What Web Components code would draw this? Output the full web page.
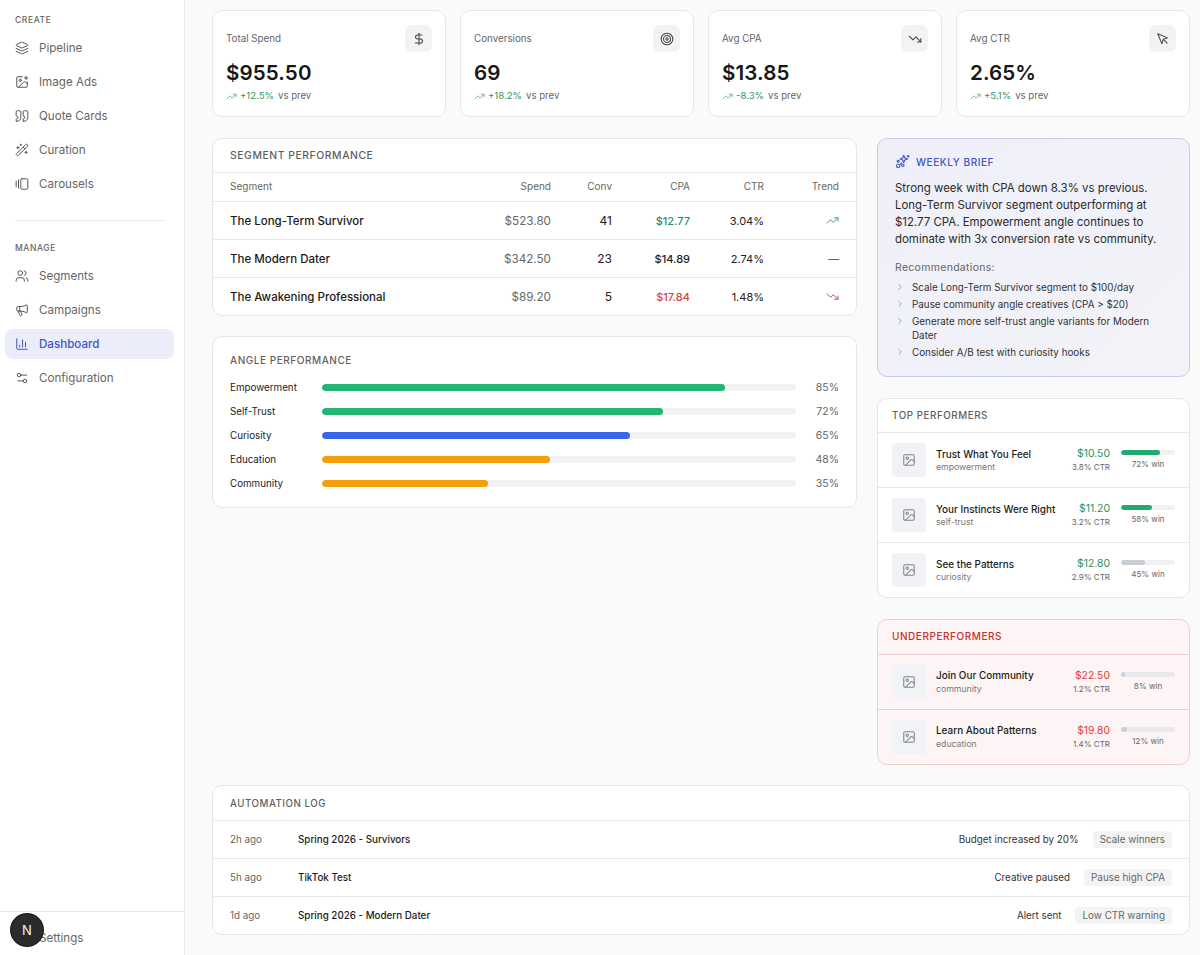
<!DOCTYPE html>
<html lang="en">
<head>
<meta charset="utf-8">
<title>Dashboard</title>
<style>
  html,body{margin:0;height:100%;background:#fafafa;overflow:hidden}
  body{font-family:Inter,'Liberation Sans',sans-serif;color:#1a1a1a}
</style>
</head>
<body>
<app-shell>
  <side-bar slot="side">
    <nav-label>CREATE</nav-label>
    <nav-item icon="layers">Pipeline</nav-item>
    <nav-item icon="imageplus">Image Ads</nav-item>
    <nav-item icon="quote">Quote Cards</nav-item>
    <nav-item icon="wand">Curation</nav-item>
    <nav-item icon="gallery">Carousels</nav-item>
    <nav-rule></nav-rule>
    <nav-label>MANAGE</nav-label>
    <nav-item icon="users">Segments</nav-item>
    <nav-item icon="megaphone">Campaigns</nav-item>
    <nav-item icon="chart" active>Dashboard</nav-item>
    <nav-item icon="sliders">Configuration</nav-item>
  </side-bar>

  <stat-row>
    <stat-card label="Total Spend" value="$955.50" delta="+12.5%" icon="dollar"></stat-card>
    <stat-card label="Conversions" value="69" delta="+18.2%" icon="target"></stat-card>
    <stat-card label="Avg CPA" value="$13.85" delta="-8.3%" icon="down"></stat-card>
    <stat-card label="Avg CTR" value="2.65%" delta="+5.1%" icon="pointer"></stat-card>
  </stat-row>

  <dash-columns>
    <data-panel slot="left" heading="SEGMENT PERFORMANCE" style="--head:10.4px;--head-h:33px;--head-b:1px">
      <seg-row head name="Segment" spend="Spend" conv="Conv" cpa="CPA" ctr="CTR" trend="Trend"></seg-row>
      <seg-row name="The Long-Term Survivor" spend="$523.80" conv="41" cpa="$12.77" ctr="3.04%" tone="good" trend="up"></seg-row>
      <seg-row name="The Modern Dater" spend="$342.50" conv="23" cpa="$14.89" ctr="2.74%" trend="flat"></seg-row>
      <seg-row name="The Awakening Professional" spend="$89.20" conv="5" cpa="$17.84" ctr="1.48%" tone="bad" trend="down"></seg-row>
    </data-panel>

    <angle-panel slot="left" heading="ANGLE PERFORMANCE">
      <angle-row name="Empowerment" pct="85" color="#22b573"></angle-row>
      <angle-row name="Self-Trust" pct="72" color="#22b573"></angle-row>
      <angle-row name="Curiosity" pct="65" color="#3b66ea"></angle-row>
      <angle-row name="Education" pct="48" color="#f59e0b"></angle-row>
      <angle-row name="Community" pct="35" color="#f59e0b"></angle-row>
    </angle-panel>

    <brief-card slot="right">
      <p slot="body">Strong week with CPA down 8.3% vs previous. Long-Term Survivor segment outperforming at $12.77 CPA. Empowerment angle continues to dominate with 3x conversion rate vs community.</p>
      <brief-item>Scale Long-Term Survivor segment to $100/day</brief-item>
      <brief-item>Pause community angle creatives (CPA &gt; $20)</brief-item>
      <brief-item>Generate more self-trust angle variants for Modern Dater</brief-item>
      <brief-item>Consider A/B test with curiosity hooks</brief-item>
    </brief-card>

    <data-panel slot="right" heading="TOP PERFORMERS" style="--head:9.8px;--head-pad:14px;--head-h:33px;--head-b:1px">
      <perf-row name="Trust What You Feel" tag="empowerment" cost="$10.50" ctr="3.8% CTR" win="72" tone="good"></perf-row>
      <perf-row name="Your Instincts Were Right" tag="self-trust" cost="$11.20" ctr="3.2% CTR" win="58" tone="good"></perf-row>
      <perf-row name="See the Patterns" tag="curiosity" cost="$12.80" ctr="2.9% CTR" win="45" tone="good" muted></perf-row>
    </data-panel>

    <data-panel slot="right" heading="UNDERPERFORMERS" tone="bad" style="--head:10px;--head-pad:14px">
      <perf-row name="Join Our Community" tag="community" cost="$22.50" ctr="1.2% CTR" win="8" tone="bad" muted></perf-row>
      <perf-row name="Learn About Patterns" tag="education" cost="$19.80" ctr="1.4% CTR" win="12" tone="bad" muted></perf-row>
    </data-panel>
  </dash-columns>

  <data-panel heading="AUTOMATION LOG" style="--head:9.7px;--head-b:0px">
    <log-row time="2h ago" name="Spring 2026 - Survivors" action="Budget increased by 20%" rule="Scale winners"></log-row>
    <log-row time="5h ago" name="TikTok Test" action="Creative paused" rule="Pause high CPA"></log-row>
    <log-row time="1d ago" name="Spring 2026 - Modern Dater" action="Alert sent" rule="Low CTR warning"></log-row>
  </data-panel>
</app-shell>

<script>
(() => {
  // lucide-style stroke icons, 24x24 viewBox
  const ICONS = {
    layers: '<path d="m12.83 2.18a2 2 0 0 0-1.66 0L2.6 6.08a1 1 0 0 0 0 1.83l8.58 3.91a2 2 0 0 0 1.66 0l8.58-3.9a1 1 0 0 0 0-1.83Z"/><path d="m22 17.65-9.17 4.16a2 2 0 0 1-1.66 0L2 17.65"/><path d="m22 12.65-9.17 4.16a2 2 0 0 1-1.66 0L2 12.65"/>',
    imageplus: '<path d="M16 5h6"/><path d="M19 2v6"/><path d="M21 11.5V19a2 2 0 0 1-2 2H5a2 2 0 0 1-2-2V5a2 2 0 0 1 2-2h7.5"/><path d="m21 15-3.086-3.086a2 2 0 0 0-2.828 0L6 21"/><circle cx="9" cy="9" r="2"/>',
    quote: '<path d="M3 21c3 0 7-1 7-8V5c0-1.25-.756-2.017-2-2H4c-1.25 0-2 .75-2 1.972V11c0 1.25.75 2 2 2 1 0 1 0 1 1v1c0 1-1 2-2 2s-1 .008-1 1.031V20c0 1 0 1 1 1z"/><path d="M15 21c3 0 7-1 7-8V5c0-1.25-.757-2.017-2-2h-4c-1.25 0-2 .75-2 1.972V11c0 1.25.75 2 2 2h.75c0 2.25.25 4-2.75 4v3c0 1 0 1 1 1z"/>',
    wand: '<path d="m21.64 3.64-1.28-1.28a1.21 1.21 0 0 0-1.72 0L2.36 18.64a1.21 1.21 0 0 0 0 1.72l1.28 1.28a1.2 1.2 0 0 0 1.72 0L21.64 5.36a1.2 1.2 0 0 0 0-1.72"/><path d="m14 7 3 3"/><path d="M5 6v4"/><path d="M19 14v4"/><path d="M10 2v2"/><path d="M7 8H3"/><path d="M21 16h-4"/><path d="M11 3H9"/>',
    gallery: '<path d="M2 7v10"/><path d="M6 5v14"/><rect x="10" y="3" width="12" height="18" rx="2"/>',
    users: '<path d="M16 21v-2a4 4 0 0 0-4-4H6a4 4 0 0 0-4 4v2"/><circle cx="9" cy="7" r="4"/><path d="M22 21v-2a4 4 0 0 0-3-3.87"/><path d="M16 3.13a4 4 0 0 1 0 7.75"/>',
    megaphone: '<path d="M11 6a13 13 0 0 0 8.4-2.8A1 1 0 0 1 21 4v12a1 1 0 0 1-1.6.8A13 13 0 0 0 11 14H5a2 2 0 0 1-2-2V8a2 2 0 0 1 2-2z"/><path d="M6 14a12 12 0 0 0 2.4 7.2 2 2 0 0 0 3.2-2.4A8 8 0 0 1 10 14"/><path d="M8 6v8"/>',
    chart: '<path d="M3 3v16a2 2 0 0 0 2 2h16"/><path d="M18 17V9"/><path d="M13 17V5"/><path d="M8 17v-3"/>',
    sliders: '<path d="M20 7h-9"/><path d="M14 17H5"/><circle cx="17" cy="17" r="3"/><circle cx="7" cy="7" r="3"/>',
    dollar: '<line x1="12" x2="12" y1="2" y2="22"/><path d="M17 5H9.5a3.5 3.5 0 0 0 0 7h5a3.5 3.5 0 0 1 0 7H6"/>',
    target: '<circle cx="12" cy="12" r="10"/><circle cx="12" cy="12" r="6"/><circle cx="12" cy="12" r="2"/>',
    down: '<path d="M16 17h6v-6"/><path d="m22 17-8.5-8.5-5 5L2 7"/>',
    up: '<path d="M16 7h6v6"/><path d="m22 7-8.5 8.5-5-5L2 17"/>',
    pointer: '<path d="m3 3 7.07 16.97 2.51-7.39 7.39-2.51L3 3z"/><path d="m13 13 6 6"/>',
    image: '<rect width="18" height="18" x="3" y="3" rx="2"/><circle cx="9" cy="9" r="2"/><path d="m21 15-3.086-3.086a2 2 0 0 0-2.828 0L6 21"/>',
    chevron: '<path d="m9 18 6-6-6-6"/>',
    brief: '<path d="m14 2 1.6 4.4L20 8l-4.4 1.6L14 14l-1.6-4.4L8 8l4.4-1.6z"/><circle cx="5" cy="19" r="2.6"/><circle cx="12.5" cy="18" r="2"/><circle cx="5" cy="11.5" r="1.6"/><path d="M21 2v3"/><path d="M19.5 3.5h3"/><path d="M8 17l2.5-3"/>'
  };

  // small helper so each class only has to hand over css + markup
  class Base extends HTMLElement {
    connectedCallback() {
      if (this.shadowRoot) return;
      this.attachShadow({ mode: 'open' });
      this.shadowRoot.innerHTML = '<style>' + this.css() + '</style>' + this.html();
    }
    attr(name) { return this.getAttribute(name) || ''; }
    css() { return ':host{display:block}'; }
    html() { return '<slot></slot>'; }
  }

  class UiIcon extends Base {
    css() {
      return `:host{display:inline-flex;width:var(--size,14px);height:var(--size,14px);flex:none}
        svg{width:100%;height:100%;fill:none;stroke:currentColor;stroke-width:var(--sw,2);stroke-linecap:round;stroke-linejoin:round}`;
    }
    html() { return '<svg viewBox="0 0 24 24">' + (ICONS[this.attr('name')] || '') + '</svg>'; }
  }

  class AppShell extends Base {
    css() {
      return `:host{display:flex;height:955px;overflow:hidden}
        main{flex:1;min-width:0;display:flex;flex-direction:column;gap:20px;padding:10px 10px 0 27px}`;
    }
    html() { return '<slot name="side"></slot><main><slot></slot></main>'; }
  }

  class SideBar extends Base {
    css() {
      return `:host{display:flex;flex-direction:column;width:185px;height:955px;box-sizing:border-box;flex:none;
          background:#fff;border-right:1px solid #e8e8e8;position:relative}
        .top{flex:1;padding:15px 10px 0 5px}
        .bottom{display:flex;align-items:center;height:44px;box-sizing:border-box;border-top:1px solid #e8e8e8;padding:8px 0 0 39px;
          font-size:11.6px;color:#666}
        .dev{position:absolute;left:11px;top:914px;width:32px;height:32px;border-radius:50%;background:#2b2b2b;
          color:#f4f4f4;display:flex;align-items:center;justify-content:center;font-size:13px;font-weight:400;
          box-shadow:0 0 0 1px #1a1a1a}`;
    }
    html() {
      return '<div class="top"><slot></slot></div><div class="bottom">Settings</div><div class="dev">N</div>';
    }
  }

  class NavLabel extends Base {
    css() {
      return `:host{display:block;padding-left:10px;font-size:8.5px;line-height:11px;letter-spacing:.6px;color:#666;font-weight:500;margin-bottom:7px}`;
    }
  }

  class NavRule extends Base {
    css() { return ':host{display:block;height:1px;background:#e8e8e8;margin:21px 10px 22px 10px}'; }
    html() { return ''; }
  }

  class NavItem extends Base {
    css() {
      return `:host{display:flex;align-items:center;gap:10px;height:30px;margin-bottom:4px;padding-left:10px;border-radius:8px;
          font-size:11.6px;color:#666;--size:14px;--sw:1.7}
        ui-icon{color:#555}
        :host([active]){background:#ebedfb;color:#4353c8;font-weight:500}
        :host([active]) ui-icon{color:#4353c8}`;
    }
    html() { return '<ui-icon name="' + this.attr('icon') + '"></ui-icon><slot></slot>'; }
  }

  class StatRow extends Base {
    css() { return ':host{display:grid;grid-template-columns:repeat(4,1fr);gap:14px;margin-bottom:1px}'; }
  }

  class StatCard extends Base {
    css() {
      return `:host{display:block;height:107px;box-sizing:border-box;background:#fff;border:1px solid #e8e8e8;border-radius:10px;
          padding:14px 13px 0 13px;position:relative}
        .top{display:flex;justify-content:space-between}
        .label{font-size:9.8px;line-height:27px;color:#666}
        .tile{width:27px;height:27px;border-radius:7px;background:#f3f3f3;display:flex;align-items:center;justify-content:center;
          color:#444;--size:14px;--sw:1.8}
        .value{font-size:20.6px;line-height:26px;font-weight:600;letter-spacing:.1px;color:#171717;margin-top:8px}
        .delta{display:flex;align-items:center;gap:3px;font-size:9.6px;line-height:14px;color:#666;margin-top:3px}
        .delta b{font-weight:400;color:#2f9468}
        .delta span{margin-left:1px}
        .delta ui-icon{--size:11px;color:#3ea77b;--sw:1.6}`;
    }
    html() {
      return `<div class="top"><span class="label">${this.attr('label')}</span>
        <span class="tile"><ui-icon name="${this.attr('icon')}"></ui-icon></span></div>
        <div class="value">${this.attr('value')}</div>
        <div class="delta"><ui-icon name="up"></ui-icon><b>${this.attr('delta')}</b><span>vs prev</span></div>`;
    }
  }

  class DashColumns extends Base {
    css() {
      return `:host{display:grid;grid-template-columns:645px 313px;gap:20px;height:627px;align-items:start}
        .col{display:flex;flex-direction:column;gap:20px}
        .col.right{gap:21px}`;
    }
    html() {
      return '<div class="col"><slot name="left"></slot></div><div class="col right"><slot name="right"></slot></div>';
    }
  }

  class DataPanel extends Base {
    css() {
      return `:host{display:block;background:#fff;border:1px solid #e6e6e6;border-radius:10px;overflow:hidden}
        :host([tone=bad]){background:#fdf5f5;border-color:#f3cccc}
        h2{margin:0;height:var(--head-h,34px);box-sizing:border-box;padding:0 var(--head-pad,17px) var(--head-b,2px);display:flex;align-items:center;
          font-size:var(--head,10.3px);font-weight:500;letter-spacing:.55px;color:#5f5f5f}
        :host([tone=bad]) h2{color:#c5302f}
        ::slotted(*){border-top:1px solid #e8e8e8}
        :host([tone=bad]) ::slotted(*){border-top-color:#f3cccc}`;
    }
    html() { return '<h2>' + this.attr('heading') + '</h2><slot></slot>'; }
  }

  class SegRow extends Base {
    css() {
      return `:host{display:grid;grid-template-columns:260px 61px 61px 78px 74px 75px;align-items:center;height:38px;
          box-sizing:border-box;padding:0 17px;font-size:11px;color:#222;text-align:right}
        :host([head]){height:29px;padding-bottom:2px;font-size:10px;color:#666}
        .name{text-align:left;font-size:11.5px;font-weight:500;color:#1a1a1a}
        :host([head]) .name{font-size:10px;font-weight:400;color:#666}
        .spend{color:#666;font-size:11.7px}
        :host([head]) .spend{font-size:10px}
        .conv{font-size:12px}
        :host([head]) .conv{font-size:10px}
        .cpa{font-weight:500}
        :host([head]) .cpa{font-weight:400}
        :host([tone=good]) .cpa{color:#2a9266}
        :host([tone=bad]) .cpa{color:#e23d3d}
        .trend{display:flex;justify-content:flex-end;--size:13px;--sw:1.8}
        .up{color:#2fa878}.down{color:#e23d3d}.flat{color:#666}`;
    }
    html() {
      const t = this.attr('trend');
      const trend = t === 'up' || t === 'down'
        ? `<ui-icon class="${t}" name="${t}"></ui-icon>`
        : `<span class="${t === 'flat' ? 'flat' : ''}">${t === 'flat' ? '—' : t}</span>`;
      return `<span class="name">${this.attr('name')}</span><span class="spend">${this.attr('spend')}</span>
        <span class="conv">${this.attr('conv')}</span><span class="cpa">${this.attr('cpa')}</span><span>${this.attr('ctr')}</span>
        <span class="trend">${trend}</span>`;
    }
  }

  class AnglePanel extends Base {
    css() {
      return `:host{display:block;background:#fff;border:1px solid #e6e6e6;border-radius:10px;height:172px;box-sizing:border-box;
          padding:0 17px}
        h2{margin:0;height:41px;padding-top:4px;box-sizing:border-box;display:flex;align-items:center;font-size:10px;font-weight:500;letter-spacing:.55px;color:#5f5f5f}
        .rows{display:flex;flex-direction:column;gap:6px}`;
    }
    html() { return '<h2>' + this.attr('heading') + '</h2><div class="rows"><slot></slot></div>'; }
  }

  class AngleRow extends Base {
    css() {
      return `:host{display:flex;align-items:center;height:18px;font-size:9.8px;color:#222}
        .name{width:92px;flex:none}
        .track{flex:1;height:7px;border-radius:4px;background:#f2f2f2;overflow:hidden}
        .fill{height:100%;border-radius:4px}
        .pct{width:43px;flex:none;text-align:right;color:#666;font-size:10.5px}`;
    }
    html() {
      const pct = this.attr('pct');
      return `<span class="name">${this.attr('name')}</span>
        <div class="track"><div class="fill" style="width:${pct}%;background:${this.attr('color')}"></div></div>
        <span class="pct">${pct}%</span>`;
    }
  }

  class BriefCard extends Base {
    css() {
      return `:host{display:block;height:239px;box-sizing:border-box;background:linear-gradient(135deg,#eeeff9,#f3f3f8);border:1px solid #c6cbeb;border-radius:10px;
          padding:14px 17px 0}
        .title{display:flex;align-items:center;gap:6px;font-size:10px;font-weight:500;letter-spacing:.55px;color:#4353c8;--size:15px;--sw:1.8;height:17px}
        ::slotted(p){margin:10px 0 0;font-size:11.45px;line-height:17px;color:#2a2a2a}
        .rec{margin:13px 0 5px;font-size:10.5px;letter-spacing:.3px;line-height:14px;color:#666}
        .list{display:flex;flex-direction:column;gap:3px}`;
    }
    html() {
      return `<div class="title"><ui-icon name="brief"></ui-icon>WEEKLY BRIEF</div><slot name="body"></slot>
        <div class="rec">Recommendations:</div><div class="list"><slot></slot></div>`;
    }
  }

  class BriefItem extends Base {
    css() {
      return `:host{display:flex;gap:7px;font-size:9.85px;line-height:14px;color:#333}
        ui-icon{--size:10px;--sw:1.6;color:#7b87c9;margin-top:2px}`;
    }
    html() { return '<ui-icon name="chevron"></ui-icon><span><slot></slot></span>'; }
  }

  class PerfRow extends Base {
    css() {
      return `:host{display:flex;align-items:center;height:55px;box-sizing:border-box;padding:0 14px}
        .thumb{width:34px;height:34px;flex:none;border-radius:4px;background:#f1f2f5;display:flex;align-items:center;justify-content:center;
          color:#80858f;--size:14px;--sw:1.8;margin-right:10px}
        :host([tone=bad]) .thumb{background:#f2f3f7}
        .text{flex:1;min-width:0}
        .name{font-size:9.95px;line-height:14px;font-weight:500;color:#1c1c1c;white-space:nowrap}
        :host([tone=bad]) .name{margin:-1px 0 1px}
        .tag{font-size:8.7px;line-height:13px;color:#777}
        .nums{text-align:right;margin-right:11px}
        .cost{font-size:10.4px;line-height:14px}
        :host([tone=good]) .cost{color:#2a9266}
        :host([tone=bad]) .cost{color:#e23d3d}
        .ctr{font-size:8px;line-height:13px;color:#666}
        .win{width:54px;flex:none;text-align:center;font-size:8px;line-height:13px;color:#666}
        .track{height:5px;border-radius:3px;background:#f1f1f1;margin-bottom:3px;overflow:hidden}
        :host([tone=bad]) .track{background:#e9e9e9}
        .fill{height:100%;border-radius:3px;background:#22ab6e}
        :host([muted]) .fill{background:#c9cdd4}`;
    }
    html() {
      const win = this.attr('win');
      return `<div class="thumb"><ui-icon name="image"></ui-icon></div>
        <div class="text"><div class="name">${this.attr('name')}</div><div class="tag">${this.attr('tag')}</div></div>
        <div class="nums"><div class="cost">${this.attr('cost')}</div><div class="ctr">${this.attr('ctr')}</div></div>
        <div class="win"><div class="track"><div class="fill" style="width:${win}%"></div></div>${win}% win</div>`;
    }
  }

  class LogRow extends Base {
    css() {
      return `:host{display:flex;align-items:center;height:38px;box-sizing:border-box;padding:0 17px 1px;font-size:9.8px}
        .time{width:68px;flex:none;color:#666}
        .name{flex:1;font-weight:500;color:#1c1c1c}
        .action{color:#333;margin-right:14px}
        .rule{background:#f3f3f3;border-radius:4px;padding:0 7px;line-height:17px;color:#666;font-size:9.9px}`;
    }
    html() {
      return `<span class="time">${this.attr('time')}</span><span class="name">${this.attr('name')}</span>
        <span class="action">${this.attr('action')}</span><span class="rule">${this.attr('rule')}</span>`;
    }
  }

  const defs = {
    'ui-icon': UiIcon, 'app-shell': AppShell, 'side-bar': SideBar, 'nav-label': NavLabel, 'nav-rule': NavRule,
    'nav-item': NavItem, 'stat-row': StatRow, 'stat-card': StatCard, 'dash-columns': DashColumns,
    'data-panel': DataPanel, 'seg-row': SegRow, 'angle-panel': AnglePanel, 'angle-row': AngleRow,
    'brief-card': BriefCard, 'brief-item': BriefItem, 'perf-row': PerfRow, 'log-row': LogRow
  };
  Object.keys(defs).forEach(k => customElements.define(k, defs[k]));
})();
</script>
</body>
</html>
